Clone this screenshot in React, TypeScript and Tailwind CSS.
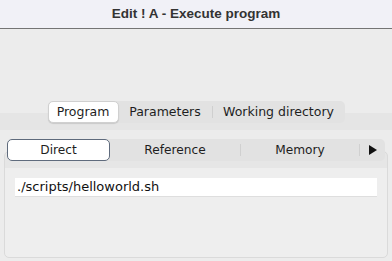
export default function App() {
  return (
    <div className="w-[392px] h-[261px] bg-[#ececec] overflow-hidden flex flex-col" style={{ fontFamily: '"DejaVu Sans", sans-serif' }}>
      <div className="h-[29px] shrink-0 bg-[#f1f1f7] border-b border-[#747474] flex items-center justify-center text-[13.5px] font-bold text-[#333]" style={{ fontFamily: '"Liberation Sans", Arial, sans-serif' }}>
        Edit ! A - Execute program
      </div>
      <div className="pt-[72px] flex justify-center relative z-10 -mb-[10px]">
        <div className="flex items-center h-[22px] rounded-[5px] bg-[#e2e2e2] text-[12.5px] text-[#1e1e1e]">
          <div className="h-[22px] w-[71px] flex items-center justify-center bg-white rounded-[5px] border border-[#d0d0d0] shadow-[0_1px_1px_rgba(0,0,0,0.12)]">Program</div>
          <div className="w-[93px] flex items-center justify-center">Parameters</div>
          <div className="w-px h-[12px] bg-[#cfcfcf]" />
          <div className="w-[132px] flex items-center justify-center">Working directory</div>
        </div>
      </div>
      <div className="flex-1 flex flex-col bg-[linear-gradient(to_bottom,#e5e5e5_0px,#e5e5e5_17px,#ececec_17px)] pt-[26px]">
        <div className="mx-[7px] h-[22px] flex items-center rounded-[5px] bg-[#e2e2e2] text-[12.2px] text-[#1e1e1e] relative z-10 -mb-[10px]">
          <div className="h-[22px] w-[103px] flex items-center justify-center bg-white rounded-[5px] border border-[#5f6b7d]">Direct</div>
          <div className="w-[130px] flex items-center justify-center">Reference</div>
          <div className="w-px h-[12px] bg-[#d0d0d0]" />
          <div className="w-[118px] flex items-center justify-center">Memory</div>
          <div className="w-px h-[12px] bg-[#d0d0d0]" />
          <div className="flex-1 flex items-center justify-center">
            <svg width="8" height="10" viewBox="0 0 8 10"><path d="M0 0 L8 5 L0 10 Z" fill="#111" /></svg>
          </div>
        </div>
        <div className="mx-[4px] h-[107px] rounded-[5px] border border-[#dadada] bg-[linear-gradient(to_bottom,#e6e6e6_0px,#e6e6e6_16px,#eeeeee_16px)] pt-[26px] px-[10px]">
          <div className="h-[19px] bg-white border-b border-[#dedede] flex items-center px-[2px] text-[13px] text-[#111]">./scripts/helloworld.sh</div>
        </div>
      </div>
    </div>
  );
}
